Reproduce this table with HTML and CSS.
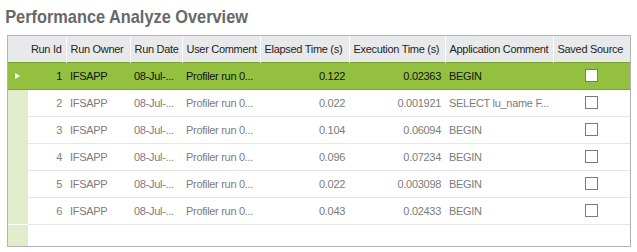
FILE: index.html
```html
<!DOCTYPE html>
<html>
<head>
<meta charset="utf-8">
<link rel="stylesheet" href="styles.css">
</head>
<body>
<h1 class="title">Performance Analyze Overview</h1>
<div class="grid">
  <table class="tbl">
    <colgroup>
      <col class="c-ind"><col class="c-id"><col class="c-owner"><col class="c-date"><col class="c-comment"><col class="c-elapsed"><col class="c-exec"><col class="c-app"><col class="c-saved">
    </colgroup>
    <thead>
      <tr>
        <th colspan="2" class="r">Run Id</th>
        <th>Run Owner</th>
        <th>Run Date</th>
        <th>User Comment</th>
        <th>Elapsed Time (s)</th>
        <th>Execution Time (s)</th>
        <th>Application Comment</th>
        <th class="last">Saved Source</th>
      </tr>
    </thead>
    <tbody>
      <tr class="sel">
        <td class="ind"><span class="arrow"></span></td>
        <td class="r">1</td><td>IFSAPP</td><td>08-Jul-...</td><td>Profiler run 0...</td>
        <td class="r">0.122</td><td class="r">0.02363</td><td>BEGIN</td><td class="ck"><span class="box"></span></td>
      </tr>
      <tr>
        <td class="ind"></td>
        <td class="r">2</td><td>IFSAPP</td><td>08-Jul-...</td><td>Profiler run 0...</td>
        <td class="r">0.022</td><td class="r">0.001921</td><td>SELECT lu_name F...</td><td class="ck"><span class="box"></span></td>
      </tr>
      <tr>
        <td class="ind"></td>
        <td class="r">3</td><td>IFSAPP</td><td>08-Jul-...</td><td>Profiler run 0...</td>
        <td class="r">0.104</td><td class="r">0.06094</td><td>BEGIN</td><td class="ck"><span class="box"></span></td>
      </tr>
      <tr>
        <td class="ind"></td>
        <td class="r">4</td><td>IFSAPP</td><td>08-Jul-...</td><td>Profiler run 0...</td>
        <td class="r">0.096</td><td class="r">0.07234</td><td>BEGIN</td><td class="ck"><span class="box"></span></td>
      </tr>
      <tr>
        <td class="ind"></td>
        <td class="r">5</td><td>IFSAPP</td><td>08-Jul-...</td><td>Profiler run 0...</td>
        <td class="r">0.022</td><td class="r">0.003098</td><td>BEGIN</td><td class="ck"><span class="box"></span></td>
      </tr>
      <tr>
        <td class="ind"></td>
        <td class="r">6</td><td>IFSAPP</td><td>08-Jul-...</td><td>Profiler run 0...</td>
        <td class="r">0.043</td><td class="r">0.02433</td><td>BEGIN</td><td class="ck"><span class="box"></span></td>
      </tr>
    </tbody>
  </table>
  <div class="filler"><div class="filler-ind"></div></div>
</div>
</body>
</html>
```
FILE: styles.css
```css
html, body {
  margin: 0;
  padding: 0;
  background: #ffffff;
}
body {
  font-family: "Liberation Sans", Arial, sans-serif;
  font-size: 11px;
  width: 637px;
  height: 252px;
  overflow: hidden;
}
.title {
  margin: 0;
  padding: 6px 0 0 6px;
  height: 30px;
  box-sizing: border-box;
  font-family: "Liberation Sans", Arial, sans-serif;
  font-weight: bold;
  font-size: 19px;
  line-height: 22px;
  color: #686868;
  white-space: nowrap;
  transform: scaleX(0.86);
  transform-origin: 0 0;
}
.grid {
  margin: 5px 0 0 7px;
  width: 622px;
  height: 210px;
  border: 1px solid #b3b3b3;
  display: flex;
  flex-direction: column;
}
.tbl {
  border-collapse: collapse;
  table-layout: fixed;
  width: 622px;
  letter-spacing: -0.3px;
}
.c-ind { width: 20px; }
.c-id { width: 38px; }
.c-owner { width: 64px; }
.c-date { width: 52px; }
.c-comment { width: 78px; }
.c-elapsed { width: 89px; }
.c-exec { width: 96px; }
.c-app { width: 108px; }
.c-saved { width: 77px; }
th {
  height: 26px;
  padding: 0 3px 0 4px;
  background: #e8e9eb;
  color: #1e1e1e;
  font-weight: normal;
  text-align: left;
  white-space: nowrap;
  overflow: hidden;
  border-right: 1px solid #ffffff;
  box-sizing: border-box;
}
th.r { padding-right: 4px; }
th.last { border-right: none; }
td {
  height: 27px;
  padding: 0 4px;
  color: #7c7c7c;
  white-space: nowrap;
  overflow: hidden;
  border-bottom: 1px solid #e6e6e6;
  box-sizing: border-box;
}
.r { text-align: right; }
td.ind {
  padding: 0;
  background: #e1ecca;
  border-bottom: none;
}
tr.sel td {
  background: #93c13f;
  color: #121212;
  border-top: 1px solid #7ba532;
  border-bottom: 1px solid #7ba532;
}
.arrow {
  display: block;
  width: 0;
  height: 0;
  margin-left: 7px;
  border-top: 3px solid transparent;
  border-bottom: 3px solid transparent;
  border-left: 5px solid #ffffff;
}
td.ck { text-align: center; padding: 0; }
.box {
  display: inline-block;
  width: 13px;
  height: 13px;
  box-sizing: border-box;
  border: 1px solid #7a7a7a;
  background: #ffffff;
  vertical-align: middle;
}
.filler {
  flex: 1;
  display: flex;
}
.filler-ind {
  width: 20px;
  background: #e1ecca;
}
```
